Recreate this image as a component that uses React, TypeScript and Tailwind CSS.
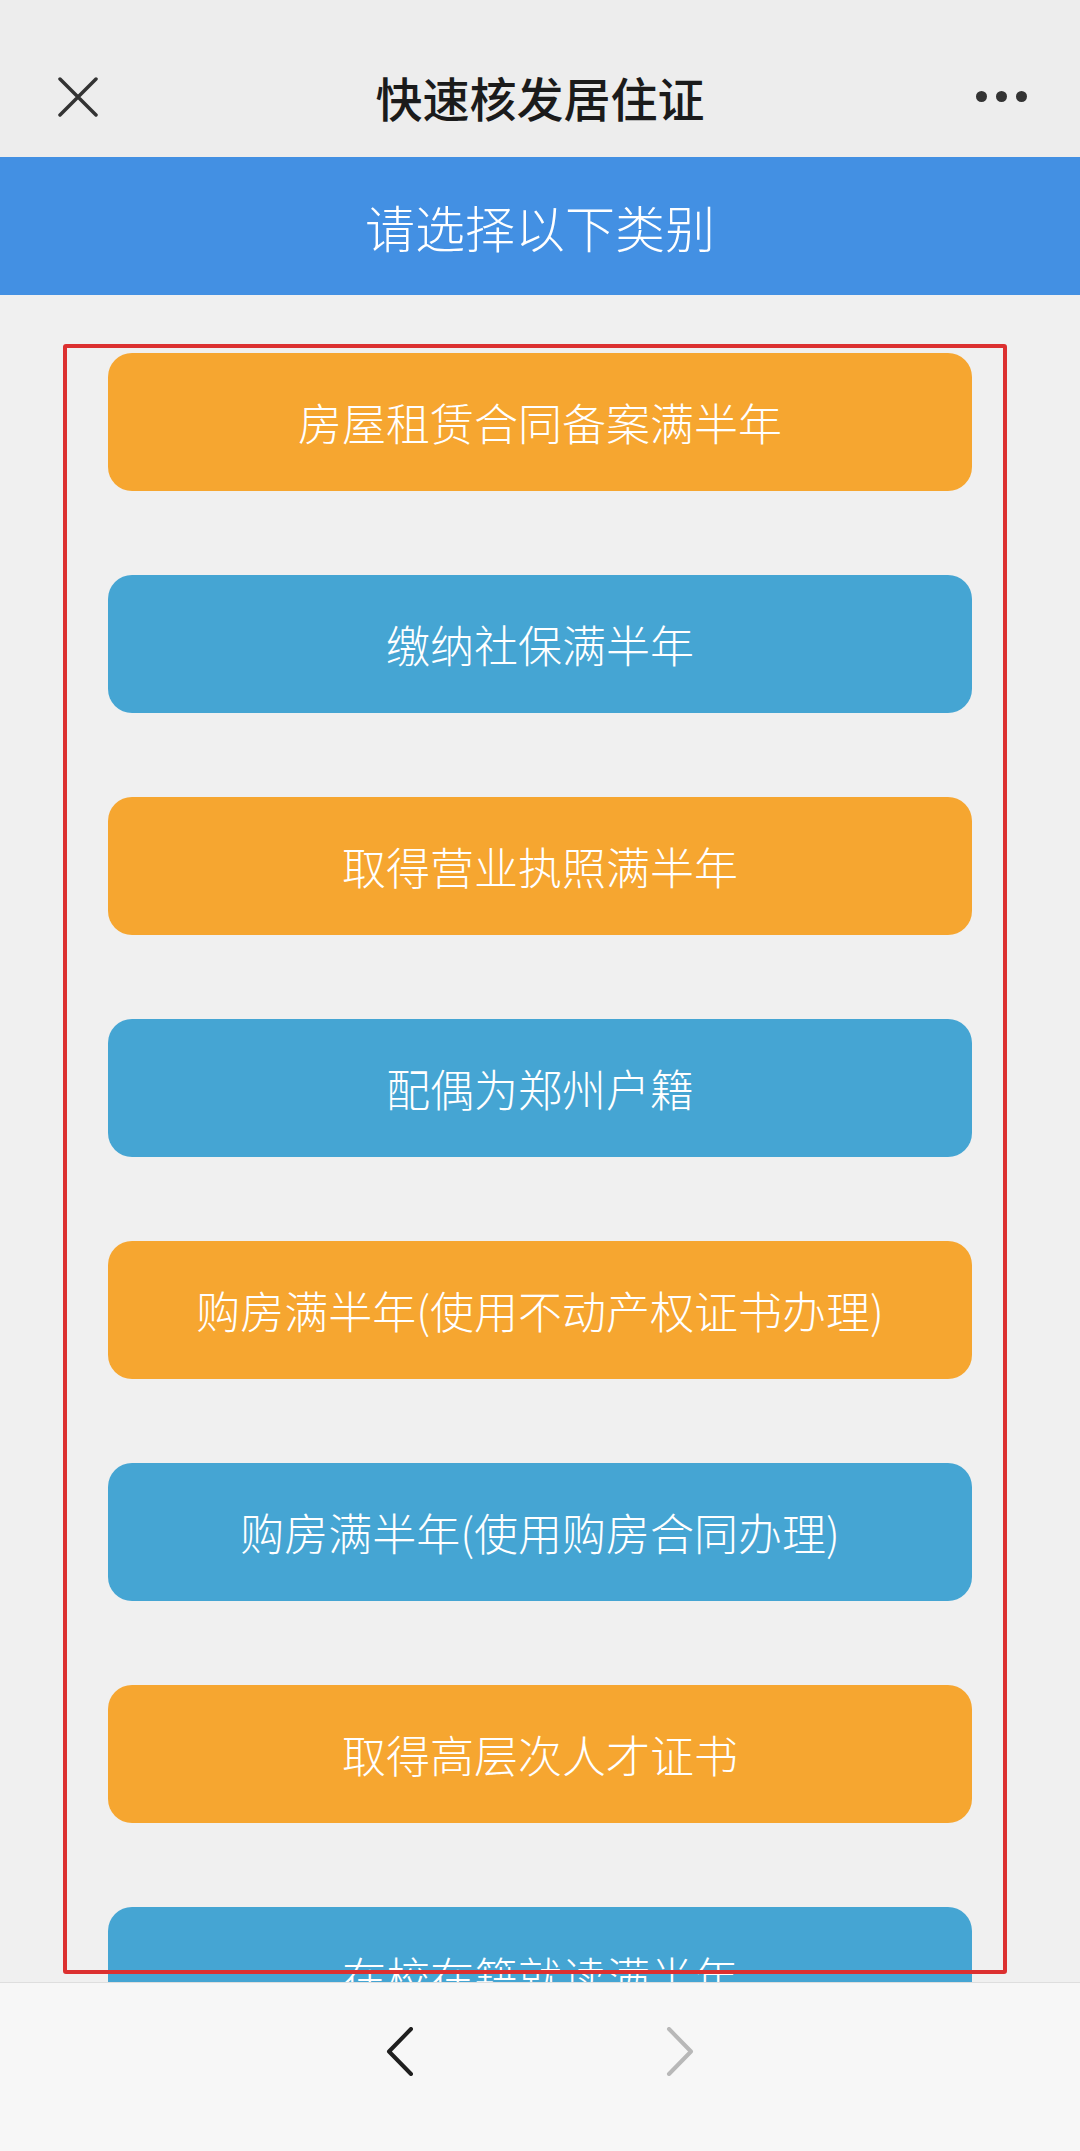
import React from "react";

const items: { label: string; color: "orange" | "blue" }[] = [
  { label: "房屋租赁合同备案满半年", color: "orange" },
  { label: "缴纳社保满半年", color: "blue" },
  { label: "取得营业执照满半年", color: "orange" },
  { label: "配偶为郑州户籍", color: "blue" },
  { label: "购房满半年(使用不动产权证书办理)", color: "orange" },
  { label: "购房满半年(使用购房合同办理)", color: "blue" },
  { label: "取得高层次人才证书", color: "orange" },
  { label: "在校在籍就读满半年", color: "blue" },
];

export default function App() {
  return (
    <div
      className="relative w-[1080px] h-[2151px] flex flex-col bg-[#f0f0f0] overflow-hidden"
      style={{ fontFamily: '"Noto Sans CJK SC", "Noto Sans", sans-serif' }}
    >
      {/* Top navigation */}
      <header className="h-[157px] shrink-0 bg-[#ededed] pt-[36px] grid grid-cols-[1fr_auto_1fr] items-center">
        <div className="pl-[58px] flex items-center">
          <svg width="40" height="40" viewBox="0 0 40 40" fill="none">
            <path d="M2 2 L38 38 M38 2 L2 38" stroke="#333333" strokeWidth="3.5" strokeLinecap="round" />
          </svg>
        </div>
        <div className="text-[47px] font-medium text-[#1b1b1b] leading-none">快速核发居住证</div>
        <div className="pr-[53px] flex justify-end items-center gap-[9px]">
          <span className="w-[11px] h-[11px] rounded-full bg-[#333333]" />
          <span className="w-[11px] h-[11px] rounded-full bg-[#333333]" />
          <span className="w-[11px] h-[11px] rounded-full bg-[#333333]" />
        </div>
      </header>

      {/* Blue banner */}
      <div className="h-[138px] shrink-0 bg-[#4390e3] flex items-center justify-center">
        <span className="text-white text-[50px] leading-none font-light">请选择以下类别</span>
      </div>

      {/* Options */}
      <main className="flex-1 overflow-hidden px-[108px] pt-[58px] flex flex-col gap-[84px]">
        {items.map((it) => (
          <div
            key={it.label}
            className={
              "h-[138px] shrink-0 rounded-[24px] flex items-center justify-center text-white text-[44px] leading-none font-light " +
              (it.color === "orange" ? "bg-[#f6a630]" : "bg-[#45a5d3]")
            }
          >
            {it.label}
          </div>
        ))}
      </main>

      {/* Bottom bar */}
      <footer className="h-[169px] shrink-0 bg-[#f7f7f7] border-t border-[#dedede] flex justify-center items-start gap-[250px] pt-[44px]">
        <svg width="30" height="49" viewBox="0 0 30 49" fill="none">
          <path d="M26 2 L4 24.5 L26 47" stroke="#1f1f1f" strokeWidth="4" strokeLinecap="round" strokeLinejoin="round" />
        </svg>
        <svg width="30" height="49" viewBox="0 0 30 49" fill="none">
          <path d="M4 2 L26 24.5 L4 47" stroke="#b8b8b8" strokeWidth="4" strokeLinecap="round" strokeLinejoin="round" />
        </svg>
      </footer>

      {/* Red annotation frame */}
      <div className="absolute left-[63px] top-[344px] w-[944px] h-[1630px] border-[4px] border-[#dc3030] rounded-[3px] pointer-events-none" />
    </div>
  );
}
